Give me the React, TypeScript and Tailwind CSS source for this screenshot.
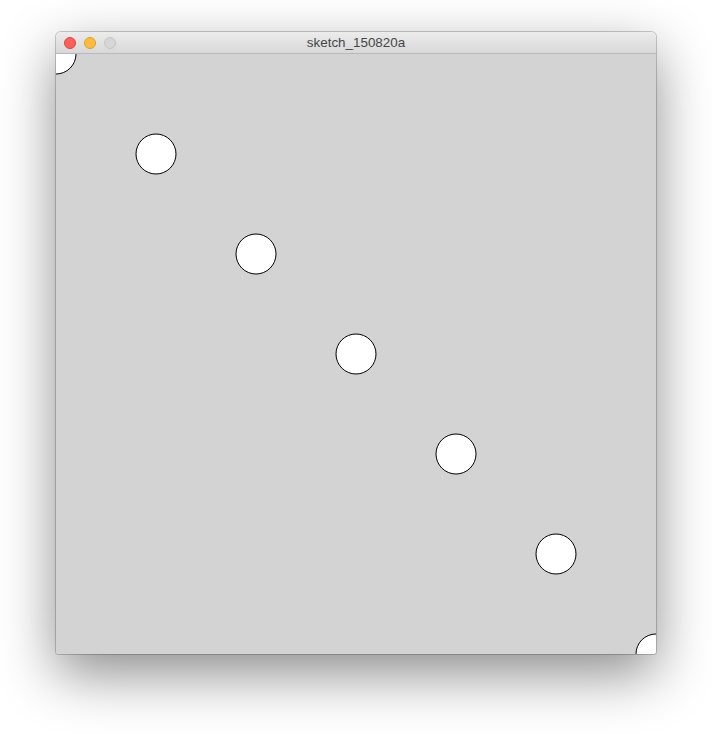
const SIZE = 600;

// sketch draws a 40px ellipse every 100px along the diagonal, edges included
const centers = [0, 100, 200, 300, 400, 500, 600];

function TrafficLights() {
  return (
    <div className="flex items-center gap-2">
      <span className="size-3 rounded-full border border-[#e0443e] bg-[#fc605c]" />
      <span className="size-3 rounded-full border border-[#dea123] bg-[#fdbc40]" />
      <span className="size-3 rounded-full border border-[#c4c4c4] bg-[#d6d6d6]" />
    </div>
  );
}

function Sketch() {
  return (
    <svg width={SIZE} height={SIZE} viewBox={`0 0 ${SIZE} ${SIZE}`} className="block">
      <rect width={SIZE} height={SIZE} fill="#d3d3d3" />
      {centers.map((c) => (
        <circle key={c} cx={c} cy={c} r={20} fill="#ffffff" stroke="#000000" strokeWidth={1} />
      ))}
    </svg>
  );
}

export default function App() {
  return (
    <div className="h-[734px] w-[712px] bg-white pl-[56px] pt-[32px] font-['Liberation_Sans',Arial,sans-serif]">
      <div className="w-[600px] overflow-hidden rounded-t-[5px] rounded-b-[3px] shadow-[0_20px_55px_rgba(0,0,0,0.45)] ring-1 ring-black/20">
        <div className="relative flex h-[22px] items-center border-b border-[#b9b9b9] bg-gradient-to-b from-[#ececec] to-[#d8d8d8] px-2">
          <TrafficLights />
          <span className="absolute inset-x-0 text-center text-[13.4px] leading-[22px] text-[#454545]">
            sketch_150820a
          </span>
        </div>
        <Sketch />
      </div>
    </div>
  );
}
